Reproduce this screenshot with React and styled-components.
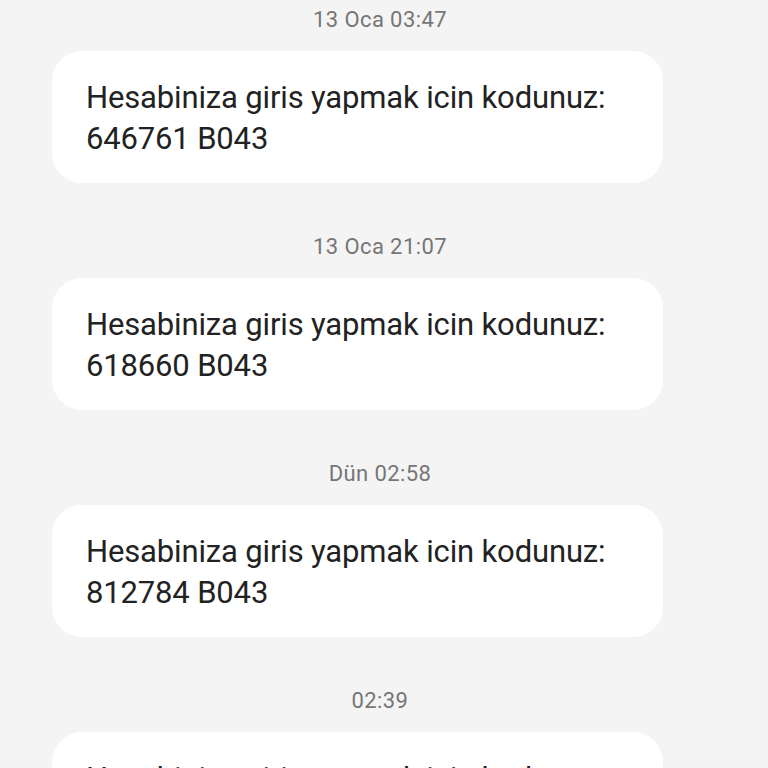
import React from "react";
import styled, { createGlobalStyle } from "styled-components";

const GlobalStyle = createGlobalStyle`
  html, body {
    margin: 0;
    padding: 0;
    background: #f4f4f4;
    overflow: hidden;
  }
  body {
    font-family: Roboto, "Noto Sans", sans-serif;
  }
`;

const Thread = styled.div`
  display: flex;
  flex-direction: column;
  padding: 8px 0 0;
  width: 768px;
  height: 768px;
  overflow: hidden;
`;

const Group = styled.div`
  display: flex;
  flex-direction: column;
  margin-bottom: 52px;
`;

const Timestamp = styled.div`
  text-align: center;
  font-size: 22px;
  line-height: 24px;
  letter-spacing: 0.4px;
  color: #767676;
  padding-right: 8px;
  margin-bottom: 19px;
`;

const Bubble = styled.div`
  margin-left: 52px;
  width: 611px;
  box-sizing: border-box;
  background: #ffffff;
  border-radius: 30px;
  padding: 26px 34px 24px;
  font-size: 31px;
  line-height: 41px;
  letter-spacing: -0.15px;
  color: #222222;
`;

const messages = [
  { time: "13 Oca 03:47", code: "646761 B043" },
  { time: "13 Oca 21:07", code: "618660 B043" },
  { time: "Dün 02:58", code: "812784 B043" },
  { time: "02:39", code: "390412 B043" },
];

export default function App() {
  return (
    <>
      <GlobalStyle />
      <Thread>
        {messages.map((m) => (
          <Group key={m.time}>
            <Timestamp>{m.time}</Timestamp>
            <Bubble>
              Hesabiniza giris yapmak icin kodunuz:
              <br />
              {m.code}
            </Bubble>
          </Group>
        ))}
      </Thread>
    </>
  );
}
